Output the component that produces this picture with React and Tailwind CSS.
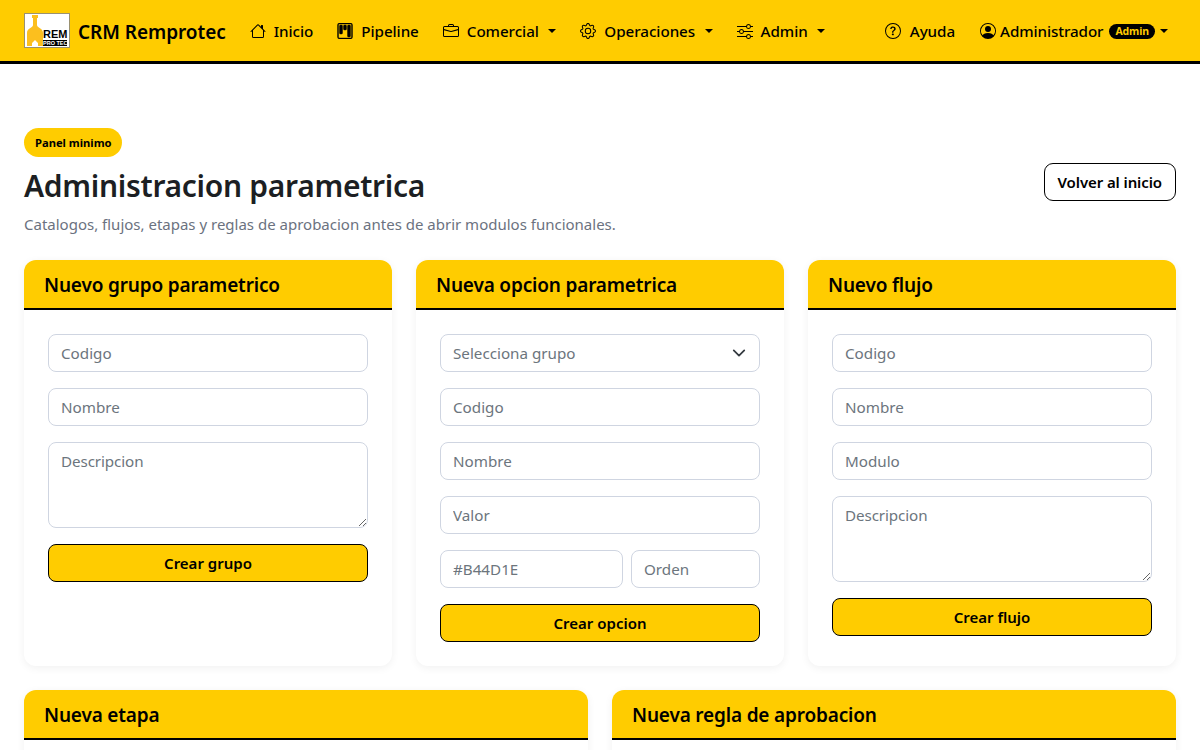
import React from "react";
import { BsHouse, BsKanban, BsBriefcase, BsGear, BsSliders, BsQuestionCircle, BsPersonCircle } from "react-icons/bs";

const Caret = ({ className }) => (
  <span className={`h-0 w-0 border-x-[4.8px] border-t-[4.8px] border-x-transparent border-t-black ${className || "ml-[9.5px]"}`} />
);

const Logo = () => (
  <div className="relative h-[35px] w-[46px] overflow-hidden border border-[#9a9170] bg-white">
    <svg viewBox="0 0 44 33" className="absolute inset-0 h-full w-full">
      <path d="M7 1h6v3h-1v7c0 3 6 3 6 8v13h-5v-3l-3-3-3 3v3H2V19c0-5 6-5 6-8V4H7z" fill="#fcbf1e" />
    </svg>
    <span className="absolute left-[18px] top-[15px] text-[11px] font-bold leading-[10px] text-black font-['Liberation_Sans',sans-serif]">REM</span>
    <span className="absolute left-[18px] top-[26px] whitespace-nowrap bg-black text-[5.5px] font-bold leading-[6px] text-white font-['Liberation_Sans',sans-serif]">PRO TEC</span>
  </div>
);

const NavItem = ({ icon: Icon, label, caret, iconClass }) => (
  <a className="flex items-center text-[15.2px] font-medium tracking-[-0.05px] text-black">
    <Icon className={`text-[16px] ${iconClass || "mr-2"}`} />
    <span>{label}</span>
    {caret && <Caret />}
  </a>
);

const fieldClass =
  "block h-[38px] w-full rounded-lg border border-[#cfd5e1] bg-white px-3 text-[15.2px] outline-none placeholder:text-[#6c757d]";

const Field = ({ placeholder, className }) => (
  <input placeholder={placeholder} className={`${fieldClass} ${className || ""}`} />
);

const Area = ({ placeholder }) => (
  <textarea
    placeholder={placeholder}
    className="block h-[86px] w-full rounded-lg border border-[#cfd5e1] bg-white px-3 py-[7px] text-[15.2px] tracking-[-0.1px] outline-none placeholder:text-[#6c757d]"
  />
);

const Submit = ({ children }) => (
  <button className="h-[38px] w-full rounded-lg border border-black bg-[#ffcc00] text-[15px] font-semibold text-black">
    {children}
  </button>
);

const Card = ({ title, children }) => (
  <section className="overflow-hidden rounded-xl bg-white shadow-[0_2px_8px_rgba(0,0,0,0.06)]">
    <h2 className="h-[50px] border-b-2 border-black bg-[#ffcc00] px-5 text-[19px] font-semibold leading-[50px] tracking-[-0.17px] text-black">
      {title}
    </h2>
    <div className="flex flex-col gap-4 p-6">{children}</div>
  </section>
);

export default function App() {
  return (
    <div className="h-screen overflow-hidden bg-white font-['Noto_Sans',sans-serif] text-[#1c1f23]">
      <nav className="flex h-[64px] items-center border-b-[3px] border-black bg-[#ffcc00] pl-6 pr-8">
        <Logo />
        <span className="ml-2 pt-[3px] text-[19px] font-semibold tracking-[-0.05px] text-black">CRM Remprotec</span>
        <div className="ml-6 flex items-center gap-6 pt-[2px]">
          <NavItem icon={BsHouse} label="Inicio" />
          <NavItem icon={BsKanban} label="Pipeline" iconClass="mr-2 stroke-[0.4]" />
          <NavItem icon={BsBriefcase} label="Comercial" caret />
          <NavItem icon={BsGear} label="Operaciones" caret />
          <NavItem icon={BsSliders} label="Admin" caret />
        </div>
        <div className="ml-auto flex items-center gap-[25px] pt-[2px]">
          <NavItem icon={BsQuestionCircle} label="Ayuda" iconClass="mr-[9px]" />
          <a className="flex items-center text-[15.2px] font-medium tracking-[-0.1px] text-black">
            <BsPersonCircle className="mr-1 text-[16px]" />
            <span>Administrador</span>
            <span className="ml-[6px] rounded-full bg-black px-[6px] text-[10.5px] font-bold leading-[15px] text-[#ffcc00]">Admin</span>
            <Caret className="ml-[5px]" />
          </a>
        </div>
      </nav>

      <main className="px-6 pt-16">
        <div className="flex items-end justify-between">
          <div>
            <span className="inline-block h-[29px] rounded-full bg-[#ffcc00] pl-[11px] pr-[10px] text-[11.2px] font-bold leading-[30px] text-black">Panel minimo</span>
            <h1 className="mt-[10px] text-[30px] font-semibold leading-[38px] tracking-[-0.3px]">Administracion parametrica</h1>
            <p className="mt-[7px] text-[15px] leading-6 text-[#6b7280]">
              Catalogos, flujos, etapas y reglas de aprobacion antes de abrir modulos funcionales.
            </p>
          </div>
          <button className="mb-[35px] h-[38px] rounded-[9px] border border-black bg-white px-[13px] text-[15px] font-semibold tracking-[-0.1px] text-black">
            Volver al inicio
          </button>
        </div>

        <div className="mt-6 grid grid-cols-3 gap-6">
          <Card title="Nuevo grupo parametrico">
            <Field placeholder="Codigo" />
            <Field placeholder="Nombre" />
            <Area placeholder="Descripcion" />
            <Submit>Crear grupo</Submit>
          </Card>
          <Card title="Nueva opcion parametrica">
            <div className="relative">
              <select defaultValue="" className={`${fieldClass} appearance-none text-[#6c757d]`}>
                <option value="">Selecciona grupo</option>
              </select>
              <svg viewBox="0 0 16 16" className="absolute right-[14px] top-3 h-[14px] w-[14px]" fill="none" stroke="#343a40" strokeWidth="2" strokeLinecap="round" strokeLinejoin="round">
                <path d="m2 5 6 6 6-6" />
              </svg>
            </div>
            <Field placeholder="Codigo" />
            <Field placeholder="Nombre" />
            <Field placeholder="Valor" />
            <div className="flex gap-2">
              <Field placeholder="#B44D1E" className="!w-[183px]" />
              <Field placeholder="Orden" className="flex-1" />
            </div>
            <Submit>Crear opcion</Submit>
          </Card>
          <Card title="Nuevo flujo">
            <Field placeholder="Codigo" />
            <Field placeholder="Nombre" />
            <Field placeholder="Modulo" />
            <Area placeholder="Descripcion" />
            <Submit>Crear flujo</Submit>
          </Card>
        </div>

        <div className="mt-6 grid grid-cols-2 gap-6">
          <Card title="Nueva etapa">
            <Field placeholder="Codigo" />
          </Card>
          <Card title="Nueva regla de aprobacion">
            <Field placeholder="Codigo" />
          </Card>
        </div>
      </main>
    </div>
  );
}
